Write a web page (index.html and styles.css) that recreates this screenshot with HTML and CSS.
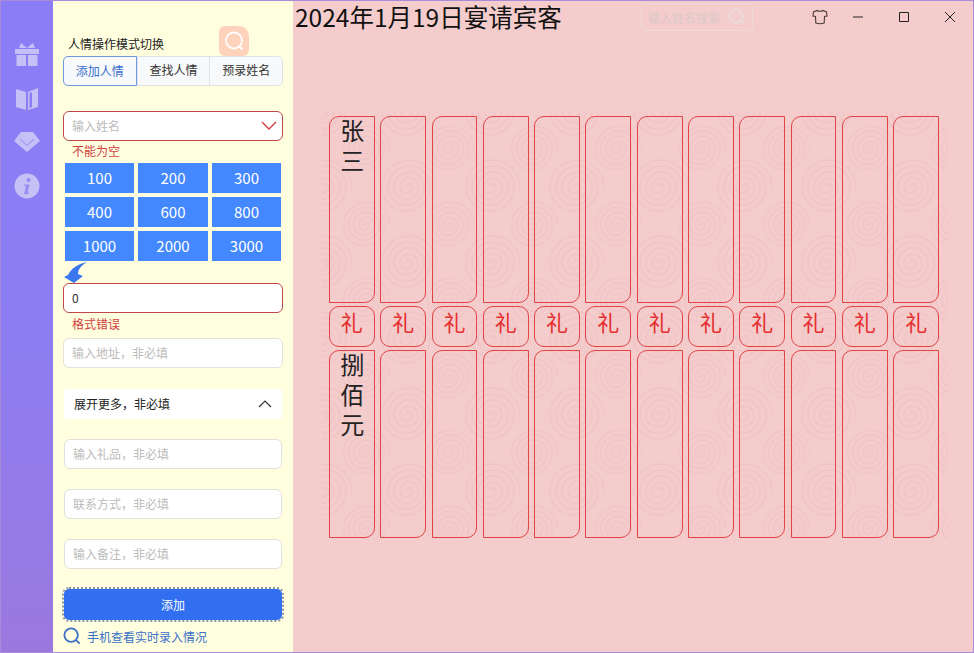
FILE: index.html
```html
<!DOCTYPE html>
<html lang="zh-CN">
<head>
    <meta charset="UTF-8">
    <title>2024年1月19日宴请宾客</title>
    <link rel="stylesheet" href="styles.css">
</head>
<body>
<div class="window">
    <aside class="sidebar">
        <svg class="side-icon" viewBox="0 0 26 26"><path d="M1 8h24v5H1zM2.500 14h9.500v11H2.500zM14 14h9.500v11H14zM5 7l2-5 6 5 6-5 2 5z"/></svg>
        <svg class="side-icon" viewBox="0 0 26 26"><path d="M2 4l10 3v18L2 22zM24 3v19l-10 3V7zM15.500 8v15l2.500-.8V7.300z" fill-rule="evenodd"/></svg>
        <svg class="side-icon" viewBox="0 0 26 26"><path d="M7 3h12l7 9-13 11L0 12z"/><path class="side-cut" d="M6 10l7 6.500L20 10"/></svg>
        <svg class="side-icon" viewBox="0 0 26 26"><circle cx="13" cy="13" r="12.500"/><circle class="side-dot" cx="14.500" cy="7" r="2"/><path class="side-dot" d="M10.500 11.500h5l-2 8h1.500l-.5 1.500h-4.500l2-8h-2z"/></svg>
    </aside>

    <section class="panel">
        <div class="mode-label">人情操作模式切换</div>
        <div class="badge">
            <svg viewBox="0 0 30 30"><circle cx="15" cy="14.500" r="8" fill="none" stroke="#fff" stroke-width="1.800"/><path d="M20.500 20.500l3 3" stroke="#fff" stroke-width="1.800"/></svg>
        </div>
        <div class="tabs">
            <div class="tab active">添加人情</div>
            <div class="tab">查找人情</div>
            <div class="tab">预录姓名</div>
        </div>

        <div class="field error name-field">
            <span class="placeholder">输入姓名</span>
            <svg class="chevron" viewBox="0 0 16 10"><path d="M1 1l7 7 7-7" fill="none" stroke="#d04040" stroke-width="1.400"/></svg>
        </div>
        <div class="error-text">不能为空</div>

        <div class="amounts">
            <button>100</button>
            <button>200</button>
            <button>300</button>
            <button>400</button>
            <button>600</button>
            <button>800</button>
            <button>1000</button>
            <button>2000</button>
            <button>3000</button>
        </div>

        <svg class="swoop" viewBox="0 0 24 21"><path d="M23 0C13 2 7 7 4 13L0 15l10 6 9-7-5-2C14 7 18 3 23 0z" fill="#3b78f0"/></svg>

        <div class="field error"><span class="value">0</span></div>
        <div class="error-text second">格式错误</div>
        <div class="field plain"><span class="placeholder">输入地址，非必填</span></div>

        <div class="expand">
            <span>展开更多，非必填</span>
            <svg class="chevron-up" viewBox="0 0 14 8"><path d="M1 7l6-6 6 6" fill="none" stroke="#333" stroke-width="1.200"/></svg>
        </div>

        <div class="field plain narrow"><span class="placeholder">输入礼品，非必填</span></div>
        <div class="field plain narrow"><span class="placeholder">联系方式，非必填</span></div>
        <div class="field plain narrow"><span class="placeholder">输入备注，非必填</span></div>

        <button class="submit">添加</button>
        <div class="phone-link">
            <svg viewBox="0 0 20 20"><circle cx="9" cy="9" r="7.500" fill="none" stroke="#3a70c8" stroke-width="2"/><path d="M14.500 14.500l4 4" stroke="#3a70c8" stroke-width="2"/></svg>
            <span>手机查看实时录入情况</span>
        </div>
    </section>

    <main class="main">
        <header class="topbar">
            <h1>2024年1月19日宴请宾客</h1>
            <div class="top-right">
                <div class="search">
                    <span>输入姓名搜索</span>
                    <svg viewBox="0 0 18 18"><circle cx="8" cy="8" r="6.500" fill="none" stroke="#e8dcdc" stroke-width="1.800"/><path d="M13 13l3.500 3.500" stroke="#e8dcdc" stroke-width="1.800"/></svg>
                </div>
                <svg class="shirt" viewBox="0 0 16 16"><path d="M5 1.500c1 1 5 1 6 0l3.500 1.500.5 4-2.500.5-.3 6.500c-2 .7-6.400 .7-8.400 0L3.500 7.500 1 7l.5-4z" fill="none" stroke="#4a3a3a" stroke-width="1.100"/></svg>
                <button class="win-btn"><svg viewBox="0 0 10 10"><path d="M0 5h10" stroke="#222" stroke-width="1"/></svg></button>
                <button class="win-btn"><svg viewBox="0 0 10 10"><path d="M.5 .5h9v9h-9z" fill="none" stroke="#222" stroke-width="1"/></svg></button>
                <button class="win-btn"><svg viewBox="0 0 10 10"><path d="M0 0l10 10M10 0L0 10" stroke="#222" stroke-width="1"/></svg></button>
            </div>
        </header>

        <div class="board">
            <svg class="spirals" width="626" height="428">
                <defs>
                    <g id="spiral">
                        <circle r="30" fill="#f4cccc"/>
                        <path d="M0 0a3 3 0 0 1 6 0a6 6 0 0 1-12 0a9 9 0 0 1 18 0a12 12 0 0 1-24 0a15 15 0 0 1 30 0a18 18 0 0 1-36 0a21 21 0 0 1 42 0a24 24 0 0 1-48 0a27 27 0 0 1 54 0" fill="none" stroke="#f0c5c6" stroke-width="1.500"/>
                    </g>
                    <pattern id="tile" width="84" height="76" patternUnits="userSpaceOnUse">
                        <use href="#spiral" transform="translate(0 0)"/>
                        <use href="#spiral" transform="translate(84 0)"/>
                        <use href="#spiral" transform="translate(0 76)"/>
                        <use href="#spiral" transform="translate(84 76)"/>
                        <use href="#spiral" transform="translate(42 38) scale(.85)"/>
                    </pattern>
                </defs>
                <rect width="626" height="428" fill="url(#tile)"/>
            </svg>

            <div class="slip"><span class="writing">张三</span></div>
            <div class="slip"></div><div class="slip"></div><div class="slip"></div>
            <div class="slip"></div><div class="slip"></div><div class="slip"></div><div class="slip"></div>
            <div class="slip"></div><div class="slip"></div><div class="slip"></div><div class="slip"></div>

            <div class="seal">礼</div><div class="seal">礼</div><div class="seal">礼</div><div class="seal">礼</div>
            <div class="seal">礼</div><div class="seal">礼</div><div class="seal">礼</div><div class="seal">礼</div>
            <div class="seal">礼</div><div class="seal">礼</div><div class="seal">礼</div><div class="seal">礼</div>

            <div class="slip"><span class="writing">捌佰元</span></div>
            <div class="slip"></div><div class="slip"></div><div class="slip"></div>
            <div class="slip"></div><div class="slip"></div><div class="slip"></div><div class="slip"></div>
            <div class="slip"></div><div class="slip"></div><div class="slip"></div><div class="slip"></div>
        </div>
    </main>
</div>
</body>
</html>
```

FILE: styles.css
```css
* {
    box-sizing: border-box;
}
html, body {
    margin: 0;
    padding: 0;
    overflow: hidden;
}
body {
    width: 974px;
    height: 653px;
    font-family: "Noto Sans CJK SC", "Noto Sans", sans-serif;
    font-size: 12px;
}
.window {
    display: flex;
    width: 974px;
    height: 653px;
    border: 1px solid #a98bdc;
    background-color: #f4cccc;
}
.sidebar {
    display: flex;
    flex-direction: column;
    align-items: center;
    gap: 18px;
    width: 52px;
    padding-top: 40px;
    background: linear-gradient(180deg, #8a7df6 0%, #8c7df2 50%, #9a78de 100%);
}
.side-icon {
    width: 26px;
    height: 26px;
    fill: #c5c0f5;
}
.side-cut {
    fill: none;
    stroke: #a79bf2;
    stroke-width: 1.2;
}
.side-dot {
    fill: #9a8cf0;
}

.panel {
    position: relative;
    width: 240px;
    padding: 35px 10px 0;
    background-color: #ffffe0;
}
.mode-label {
    height: 16px;
    margin-bottom: 4px;
    padding-left: 5px;
    line-height: 16px;
    color: #222;
}
.badge {
    position: absolute;
    top: 25px;
    left: 166px;
    width: 30px;
    height: 30px;
    border-radius: 6px 10px 6px 6px;
    background-color: #ffd2bb;
}
.badge svg {
    display: block;
}
.tabs {
    display: flex;
    height: 30px;
    border: 1px solid #dfe3e8;
    border-radius: 5px;
    background-color: #f8f9fa;
}
.tab {
    flex: 1;
    line-height: 26px;
    text-align: center;
    color: #333;
    border-left: 1px solid #dfe3e8;
}
.tab:first-child {
    border-left: none;
}
.tab.active {
    margin: -1px 0 -1px -1px;
    line-height: 28px;
    color: #3a6fd0;
    border: 1px solid #6f9bdc;
    border-radius: 5px 0 0 5px;
}

.field {
    display: flex;
    align-items: center;
    justify-content: space-between;
    height: 30px;
    padding: 0 8px 2px;
    border: 1px solid #e2e2dc;
    border-radius: 6px;
    background-color: #fff;
}
.field.error {
    border-color: #c04848;
}
.name-field {
    margin-top: 25px;
    padding-right: 5px;
    padding-bottom: 0;
}
.placeholder {
    color: #bbb;
}
.name-field .placeholder {
    margin-top: -2px;
}
.value {
    color: #333;
}
.chevron {
    width: 16px;
    height: 10px;
}
.error-text {
    height: 22px;
    padding-left: 9px;
    line-height: 19px;
    color: #d04040;
}
.error-text.second {
    height: 25px;
    line-height: 21px;
}
.amounts {
    display: grid;
    grid-template-columns: 69px 70px 69px;
    grid-auto-rows: 30px;
    gap: 4px;
    padding-left: 2px;
}
.amounts button {
    padding: 0 0 2px;
    border: none;
    font-family: inherit;
    font-size: 15px;
    color: #fff;
    background-color: #4488ff;
}
.swoop {
    display: block;
    width: 24px;
    height: 21px;
    margin: 1px 0 0 1px;
}
.expand {
    display: flex;
    align-items: center;
    justify-content: space-between;
    height: 30px;
    margin: 21px 1px 20px;
    padding: 0 10px 1px;
    border-radius: 4px;
    color: #222;
    background-color: #fff;
}
.chevron-up {
    width: 14px;
    height: 8px;
}
.field.narrow {
    margin: 0 1px 20px;
}
.submit {
    display: block;
    width: 218px;
    height: 31px;
    margin: 1px 1px 0;
    padding: 0;
    border: none;
    border-radius: 5px;
    outline: 2px dotted #8a96a8;
    font-family: inherit;
    font-size: 12px;
    color: #fff;
    background-color: #326ff0;
}
.phone-link {
    display: flex;
    align-items: center;
    gap: 6px;
    margin-top: 7px;
    color: #3a70c8;
}
.phone-link svg {
    width: 18px;
    height: 18px;
}

.main {
    flex: 1;
    min-width: 0;
}
.topbar {
    display: flex;
    justify-content: space-between;
    height: 32px;
    padding-left: 2px;
}
.topbar h1 {
    margin: 0;
    font-size: 24.500px;
    font-weight: 400;
    line-height: 32px;
    color: #111;
}
.top-right {
    display: flex;
    align-items: center;
}
.search {
    display: flex;
    align-items: center;
    justify-content: space-between;
    width: 112px;
    height: 28px;
    margin: 0 59px 0 0;
    padding: 0 6px;
    border: 1px solid #eedada;
    border-radius: 4px;
    color: #dcc8c8;
}
.search svg {
    width: 18px;
    height: 18px;
}
.shirt {
    width: 16px;
    height: 16px;
    margin-right: 7px;
}
.win-btn {
    display: flex;
    align-items: center;
    justify-content: center;
    width: 46px;
    height: 32px;
    padding: 0;
    border: none;
    background: none;
}
.win-btn svg {
    width: 10px;
    height: 10px;
}

.board {
    position: relative;
    display: grid;
    grid-template-columns: repeat(12, 1fr);
    grid-template-rows: 187px 41px 188px;
    gap: 3px 5.6px;
    width: 610px;
    margin: 83px 0 0 36px;
}
.spirals {
    position: absolute;
    top: -5px;
    left: -7px;
}
.slip {
    position: relative;
    display: flex;
    justify-content: center;
    padding-top: 2px;
    border: 1px solid #e04444;
    border-radius: 10px 0 10px 0;
}
.writing {
    writing-mode: vertical-rl;
    text-orientation: upright;
    font-size: 24px;
    font-weight: 400;
    letter-spacing: 6px;
    line-height: 1;
    color: #222;
}
.seal {
    position: relative;
    border: 1px solid #e04444;
    border-radius: 10px;
    font-size: 22px;
    font-weight: 400;
    line-height: 29px;
    text-align: center;
    color: #e62e2e;
}
```
